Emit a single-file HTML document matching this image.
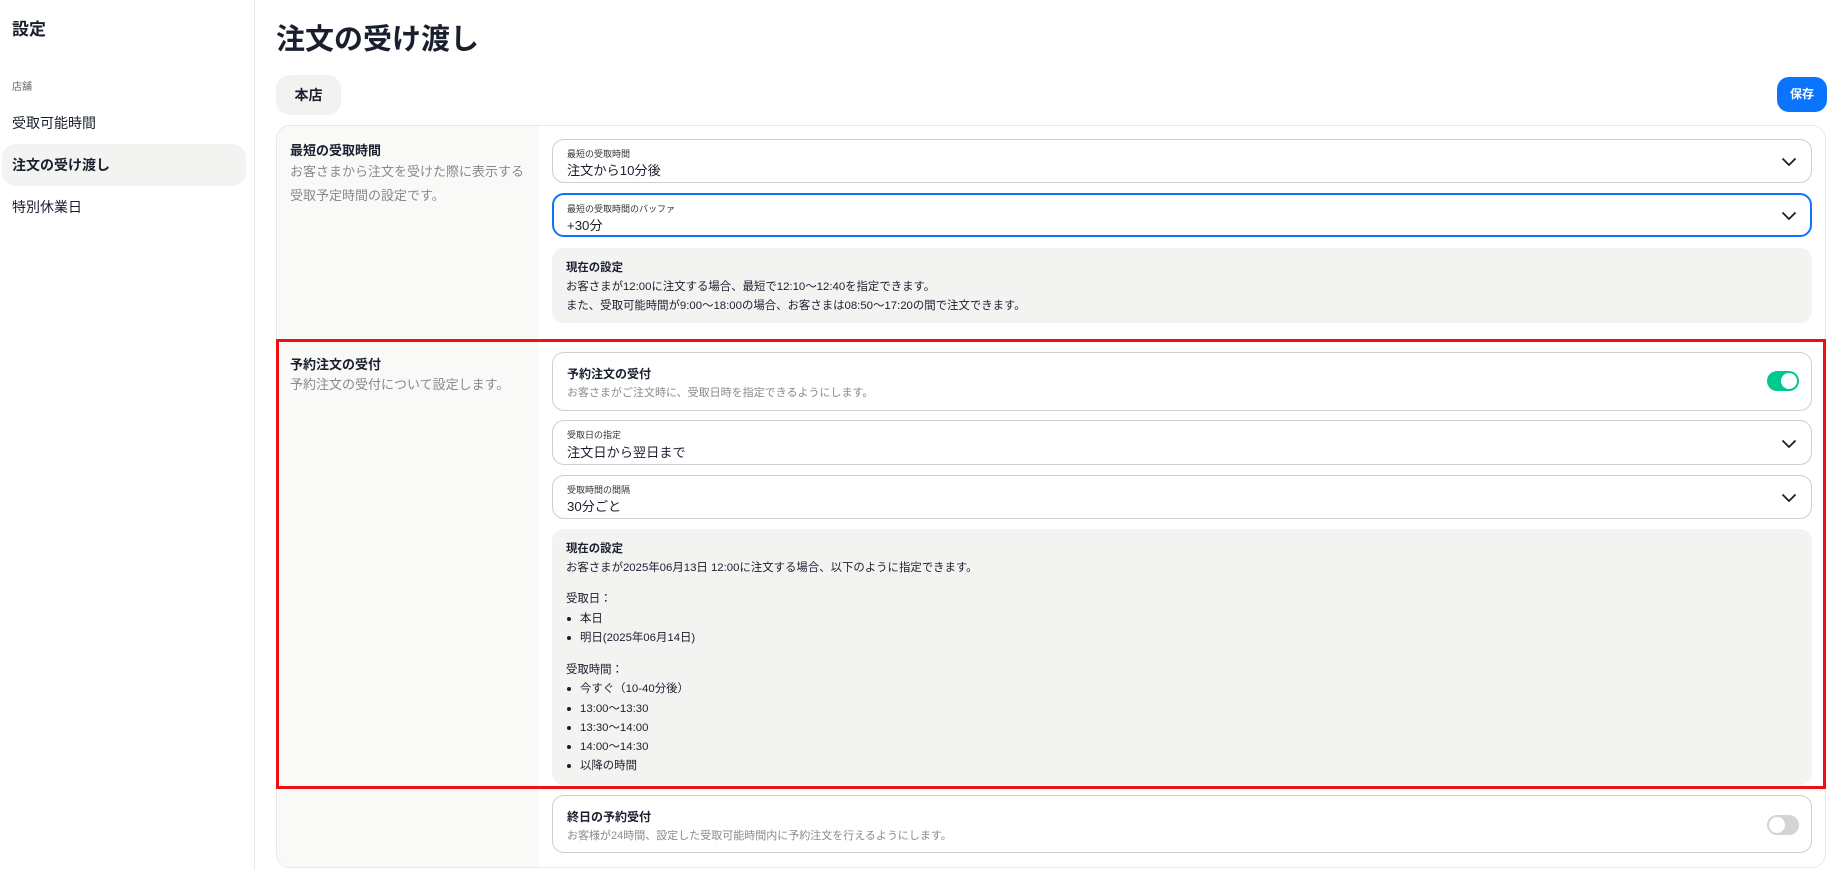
<!DOCTYPE html>
<html><head><meta charset="utf-8"><style>
*{box-sizing:border-box;margin:0;padding:0}
body{width:1841px;height:870px;overflow:hidden;background:#fff;font-family:"Liberation Sans","Noto Sans CJK JP",sans-serif;color:#1a1f2e;position:relative}
.a{position:absolute;white-space:nowrap}
.side{position:absolute;left:0;top:0;width:255px;height:870px;border-right:1px solid #e8e8e8}
.sel{position:absolute;left:552px;width:1260px;border:1px solid #cfcfcf;border-radius:12px;background:#fff}
.sel .l{position:absolute;left:14px;font-size:9px;color:#333}
.sel .v{position:absolute;left:14px;font-size:13.2px;color:#1a1f2e}
.chev{position:absolute;right:14px;width:16px;height:10px}
.info{position:absolute;left:552px;width:1260px;background:#f3f3f2;border-radius:12px;font-size:11.4px;color:#1a1f2e}
.info div{position:absolute;left:14px;white-space:nowrap}
.b{font-weight:bold}
.gray{color:#8a8a8a}
.dot{display:inline-block;width:4px;height:4px;border-radius:50%;background:#1a1f2e;margin-right:9px;vertical-align:middle;margin-left:1px}
</style></head><body>
<div class="side">
<div class="a b" style="left:12px;top:15px;font-size:17px">設定</div>
<div class="a" style="left:12px;top:78px;font-size:10px;color:#666">店舗</div>
<div class="a" style="left:12px;top:113px;font-size:14px">受取可能時間</div>
<div class="a" style="left:2px;top:144px;width:244px;height:42px;background:#f3f3f2;border-radius:14px"></div>
<div class="a b" style="left:12px;top:155px;font-size:14px">注文の受け渡し</div>
<div class="a" style="left:12px;top:197px;font-size:14px">特別休業日</div>
</div>
<div class="a b" style="left:276px;top:16px;font-size:29px">注文の受け渡し</div>
<div class="a b" style="left:276px;top:75px;width:65px;height:40px;background:#f2f2f0;border-radius:14px;font-size:14px;text-align:center;line-height:40px">本店</div>
<div class="a b" style="left:1777px;top:77px;width:50px;height:35px;background:#0a74ff;border-radius:12px;color:#fff;font-size:12px;text-align:center;line-height:35px">保存</div>

<div class="a" style="left:276px;top:125px;width:1550px;height:743px;border:1px solid #e8e8e8;border-radius:14px;overflow:hidden">
<div style="position:absolute;left:0;top:0;width:262px;height:100%;background:#f9f9f8"></div>
</div>
<div class="a b" style="left:290px;top:140px;font-size:13px">最短の受取時間</div>
<div class="a gray" style="left:290px;top:160px;font-size:13px;line-height:24px">お客さまから注文を受けた際に表示する<br>受取予定時間の設定です。</div>

<div class="sel" style="top:139px;height:44px"><div class="l" style="top:7px">最短の受取時間</div><div class="v" style="top:20px">注文から10分後</div>
<svg class="chev" style="top:17px" viewBox="0 0 16 10"><path d="M1.5 1.5L8 8l6.5-6.5" fill="none" stroke="#1a1f2e" stroke-width="1.8"/></svg></div>
<div class="sel" style="top:193px;height:44px;border:2px solid #0a74ff"><div class="l" style="top:7px;left:13px">最短の受取時間のバッファ</div><div class="v" style="top:20px;left:13px">+30分</div>
<svg class="chev" style="top:16px;right:13px" viewBox="0 0 16 10"><path d="M1.5 1.5L8 8l6.5-6.5" fill="none" stroke="#1a1f2e" stroke-width="1.8"/></svg></div>
<div class="info" style="top:248px;height:75px"><div class="b" style="top:11px">現在の設定</div><div style="top:30px">お客さまが12:00に注文する場合、最短で12:10〜12:40を指定できます。</div><div style="top:49px">また、受取可能時間が9:00〜18:00の場合、お客さまは08:50〜17:20の間で注文できます。</div></div>

<div class="a" style="left:276px;top:339px;width:1550px;height:450px;border:3px solid #f01010"></div>
<div class="a b" style="left:290px;top:354px;font-size:13px">予約注文の受付</div>
<div class="a gray" style="left:290px;top:374px;font-size:13px">予約注文の受付について設定します。</div>

<div class="sel" style="top:352px;height:59px"><div class="b" style="position:absolute;left:14px;top:12px;font-size:12px">予約注文の受付</div><div class="gray" style="position:absolute;left:14px;top:31px;font-size:11px">お客さまがご注文時に、受取日時を指定できるようにします。</div>
<div style="position:absolute;right:12px;top:18px;width:32px;height:20px;border-radius:10px;background:#00c98f"><div style="position:absolute;right:2px;top:2px;width:16px;height:16px;border-radius:50%;background:#fff"></div></div></div>
<div class="sel" style="top:420px;height:45px"><div class="l" style="top:7px">受取日の指定</div><div class="v" style="top:21px">注文日から翌日まで</div>
<svg class="chev" style="top:18px" viewBox="0 0 16 10"><path d="M1.5 1.5L8 8l6.5-6.5" fill="none" stroke="#1a1f2e" stroke-width="1.8"/></svg></div>
<div class="sel" style="top:475px;height:44px"><div class="l" style="top:7px">受取時間の間隔</div><div class="v" style="top:20px">30分ごと</div>
<svg class="chev" style="top:17px" viewBox="0 0 16 10"><path d="M1.5 1.5L8 8l6.5-6.5" fill="none" stroke="#1a1f2e" stroke-width="1.8"/></svg></div>
<div class="info" style="top:529px;height:256px">
<div class="b" style="top:11px">現在の設定</div>
<div style="top:30px">お客さまが2025年06月13日 12:00に注文する場合、以下のように指定できます。</div>
<div style="top:61px">受取日：</div>
<div style="top:81px"><span class="dot"></span>本日</div>
<div style="top:100px"><span class="dot"></span>明日(2025年06月14日)</div>
<div style="top:132px">受取時間：</div>
<div style="top:151px"><span class="dot"></span>今すぐ（10-40分後）</div>
<div style="top:171px"><span class="dot"></span>13:00〜13:30</div>
<div style="top:190px"><span class="dot"></span>13:30〜14:00</div>
<div style="top:209px"><span class="dot"></span>14:00〜14:30</div>
<div style="top:228px"><span class="dot"></span>以降の時間</div>
</div>

<div class="sel" style="top:795px;height:58px"><div class="b" style="position:absolute;left:14px;top:12px;font-size:12px">終日の予約受付</div><div class="gray" style="position:absolute;left:14px;top:31px;font-size:11px">お客様が24時間、設定した受取可能時間内に予約注文を行えるようにします。</div>
<div style="position:absolute;right:12px;top:19px;width:32px;height:20px;border-radius:10px;background:#d4d4d2"><div style="position:absolute;left:2px;top:2px;width:16px;height:16px;border-radius:50%;background:#fff"></div></div></div>
</body></html>
